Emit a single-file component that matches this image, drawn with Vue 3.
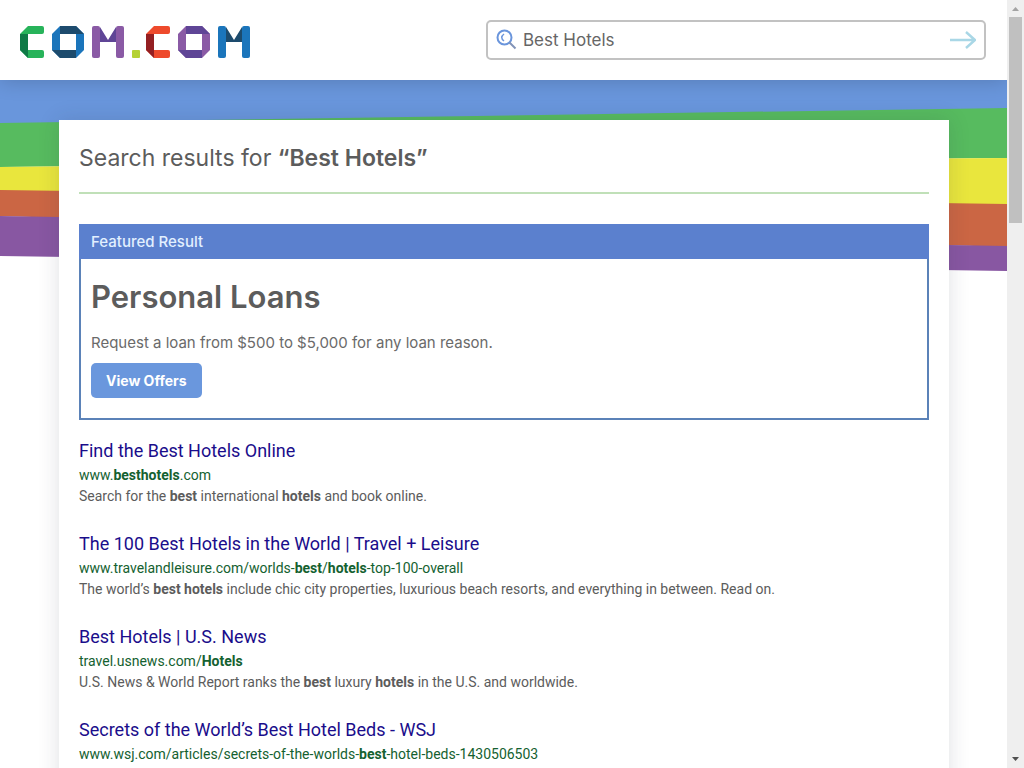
<script setup>
import { ref } from 'vue'

const query = ref('Best Hotels')

const results = [
  {
    title: 'Find the Best Hotels Online',
    url: ['www.', '*besthotels', '.com'],
    text: ['Search for the ', '*best', ' international ', '*hotels', ' and book online.']
  },
  {
    title: 'The 100 Best Hotels in the World | Travel + Leisure',
    url: ['www.travelandleisure.com/worlds-', '*best', '/', '*hotels', '-top-100-overall'],
    text: ['The world’s ', '*best hotels', ' include chic city properties, luxurious beach resorts, and everything in between. Read on.']
  },
  {
    title: 'Best Hotels | U.S. News',
    url: ['travel.usnews.com/', '*Hotels'],
    text: ['U.S. News & World Report ranks the ', '*best', ' luxury ', '*hotels', ' in the U.S. and worldwide.']
  },
  {
    title: 'Secrets of the World’s Best Hotel Beds - WSJ',
    url: ['www.wsj.com/articles/secrets-of-the-worlds-', '*best', '-hotel-beds-1430506503'],
    text: []
  }
]

const isBold = (part) => part.startsWith('*')
const plain = (part) => part.replace('*', '')
</script>

<template>
  <div class="window">
    <div class="page">
      <header class="header">
        <a href="#" class="logo" aria-label="COM.COM">
          <svg width="232" height="34" viewBox="0 0 232 34" aria-hidden="true">
            <g>
              <path fill="#27b35a" d="M0 8 8 0H22q2 0 2 2V6q0 2-2 2H8V24H22q2 0 2 2v4q0 2-2 2H8L0 24Z" />
              <path fill="#0f7a46" d="M0 8H8V32L0 24Z" />
            </g>
            <g transform="translate(32 0)">
              <path fill="#1b75bb" fill-rule="evenodd" d="M8 0H24L32 8V24L24 32H8L0 24V8ZM8 8V24H24V8Z" />
              <path fill="#1d4b6d" d="M8 0H24L32 8H8ZM24 32H8L0 24H24Z" />
            </g>
            <g transform="translate(72 0)">
              <path fill="#5f4596" d="M8 1 16 14 24 1V16H8Z" />
              <rect fill="#8a5aa5" width="8" height="32" rx="2" />
              <rect fill="#8a5aa5" x="24" width="8" height="32" rx="2" />
            </g>
            <rect fill="#b5d235" x="112" y="24" width="8" height="8" rx="1" />
            <g transform="translate(126 0)">
              <path fill="#ee4a2c" d="M0 8 8 0H22q2 0 2 2V6q0 2-2 2H8V24H22q2 0 2 2v4q0 2-2 2H8L0 24Z" />
              <path fill="#941f22" d="M0 8H8V32L0 24Z" />
            </g>
            <g transform="translate(158 0)">
              <path fill="#8a5aa5" fill-rule="evenodd" d="M8 0H24L32 8V24L24 32H8L0 24V8ZM8 8V24H24V8Z" />
              <path fill="#5f4596" d="M8 0H24L32 8H8ZM24 32H8L0 24H24Z" />
            </g>
            <g transform="translate(198 0)">
              <path fill="#1d4b6d" d="M8 1 16 14 24 1V16H8Z" />
              <rect fill="#1b75bb" width="8" height="32" rx="2" />
              <rect fill="#1b75bb" x="24" width="8" height="32" rx="2" />
            </g>
          </svg>
        </a>
        <form class="search" role="search" @submit.prevent>
          <svg class="lens" width="22" height="22" viewBox="0 0 22 22" aria-hidden="true">
            <circle cx="8.500" cy="8.500" r="7" fill="none" stroke="#6a95dc" stroke-width="2" />
            <path d="M8 5Q3.500 8.500 8 12" fill="none" stroke="#6a95dc" stroke-width="1.500" />
            <path d="M13.500 13.500l6 6" stroke="#8193b8" stroke-width="2" />
          </svg>
          <input v-model="query" type="text" aria-label="Search" />
          <button type="submit" aria-label="Submit search">
            <svg width="28" height="20" viewBox="0 0 28 20" aria-hidden="true">
              <path d="M2 10H27M18 2l9 8-9 8" fill="none" stroke="#a9d7e6" stroke-width="2.400" />
            </svg>
          </button>
        </form>
      </header>

      <div class="body">
        <svg class="ribbon" viewBox="0 0 1007 192" preserveAspectRatio="none" aria-hidden="true">
          <path fill="#6996dc" d="M0 0H1007V29L0 44Z" />
          <path fill="#57bb5f" d="M0 43 1007 28V78L500 82 0 87Z" />
          <path fill="#e9e63d" d="M0 87 500 81 1007 78V125L0 111Z" />
          <path fill="#cb6644" d="M0 110 1007 124V167L0 136Z" />
          <path fill="#8857a2" d="M0 136 59 137 949 165 1007 166V191L0 176Z" />
        </svg>

        <main class="card">
          <h1>Search results for <b>“Best Hotels”</b></h1>

          <section class="featured">
            <h2>Featured Result</h2>
            <div class="offer">
              <h3>Personal Loans</h3>
              <p>Request a loan from $500 to $5,000 for any loan reason.</p>
              <button type="button">View Offers</button>
            </div>
          </section>

          <article v-for="r in results" :key="r.title" class="result">
            <a href="#">{{ r.title }}</a>
            <cite><template v-for="(p, i) in r.url" :key="i"><b v-if="isBold(p)">{{ plain(p) }}</b><template v-else>{{ p }}</template></template></cite>
            <p><template v-for="(p, i) in r.text" :key="i"><b v-if="isBold(p)">{{ plain(p) }}</b><template v-else>{{ p }}</template></template></p>
          </article>
        </main>
      </div>
    </div>

    <div class="scrollbar" aria-hidden="true">
      <svg width="17" height="17" viewBox="0 0 17 17"><path fill="#a3a3a3" d="M5 11 8.500 7 12 11Z" /></svg>
      <div class="track"><div class="thumb"></div></div>
      <svg width="17" height="17" viewBox="0 0 17 17"><path fill="#505050" d="M5 6H12L8.500 10Z" /></svg>
    </div>
  </div>
</template>

<style>
body {
  overflow: hidden;
}
</style>

<style scoped>
* {
  box-sizing: border-box;
}
.window {
  display: grid;
  grid-template-columns: 1fr 17px;
  height: 100vh;
  background: #fff;
  color: #5c5c5c;
  font-family: Inter, "Liberation Sans", sans-serif;
}
.page {
  min-width: 0;
  overflow: hidden;
}
.header {
  position: relative;
  z-index: 1;
  display: flex;
  align-items: center;
  justify-content: space-between;
  height: 80px;
  padding: 0 21px 0 20px;
  background: #fff;
  box-shadow: 0 0 20px rgba(0, 0, 0, 0.2);
}
.logo,
.logo svg {
  display: block;
}
.logo {
  padding-top: 6px;
}
.search {
  display: flex;
  align-items: center;
  width: 500px;
  height: 40px;
  padding: 0 8px;
  border: 2px solid #c2c2c2;
  border-radius: 5px;
  background: #fff;
}
.search input {
  flex: 1;
  min-width: 0;
  padding: 0 5px;
  border: 0;
  outline: 0;
  background: none;
  color: #666;
  font: 17px Inter, "Liberation Sans", sans-serif;
}
.search button {
  display: flex;
  padding: 0;
  border: 0;
  background: none;
}
.body {
  position: relative;
  padding: 40px 58px 0 59px;
}
.ribbon {
  position: absolute;
  top: 0;
  left: 0;
  width: 100%;
  height: 192px;
}
.card {
  position: relative;
  padding: 20px 20px 40px;
  background: #fff;
  box-shadow: 0 0 20px rgba(40, 50, 70, 0.15);
}
h1 {
  margin: 0 0 30px;
  padding-bottom: 16px;
  border-bottom: 2px solid #c0e0b8;
  font-size: 23px;
  font-weight: 400;
  line-height: 36px;
}
h1 b {
  font-weight: 600;
}
.featured {
  margin-bottom: 19px;
  border: 2px solid #5b82b8;
}
h2 {
  margin: -2px -2px 0;
  padding: 0 12px;
  background: #5b80ce;
  color: #e2f0ff;
  font-size: 15px;
  font-weight: 500;
  line-height: 35px;
}
.offer {
  padding: 18px 10px 20px;
}
h3 {
  margin: 0 0 14px;
  font-size: 31px;
  font-weight: 600;
  line-height: 40px;
}
.offer p {
  margin: 0 0 8px;
  color: #6a6a6a;
  font-size: 15px;
  line-height: 24px;
}
.offer button {
  display: block;
  height: 35px;
  padding: 0 15px;
  border: 0;
  border-radius: 5px;
  background: #6a97dd;
  color: #fff;
  font: 700 14px Inter, "Liberation Sans", sans-serif;
}
.result {
  margin-bottom: 27px;
  font-family: Roboto, "Liberation Sans", sans-serif;
}
.result a {
  display: block;
  color: #1a0d8b;
  font-size: 18px;
  line-height: 24px;
  text-decoration: none;
}
.result cite {
  display: block;
  color: #146130;
  font-size: 14px;
  font-style: normal;
  line-height: 24px;
}
.result p {
  margin: 0;
  font-size: 14px;
  line-height: 18px;
}
.result b {
  font-weight: 700;
}
.scrollbar {
  display: flex;
  flex-direction: column;
  background: #efefef;
}
.scrollbar svg {
  display: block;
}
.track {
  flex: 1;
  padding: 0 2px;
}
.thumb {
  height: 28%;
  background: #c0c0c0;
}
</style>
